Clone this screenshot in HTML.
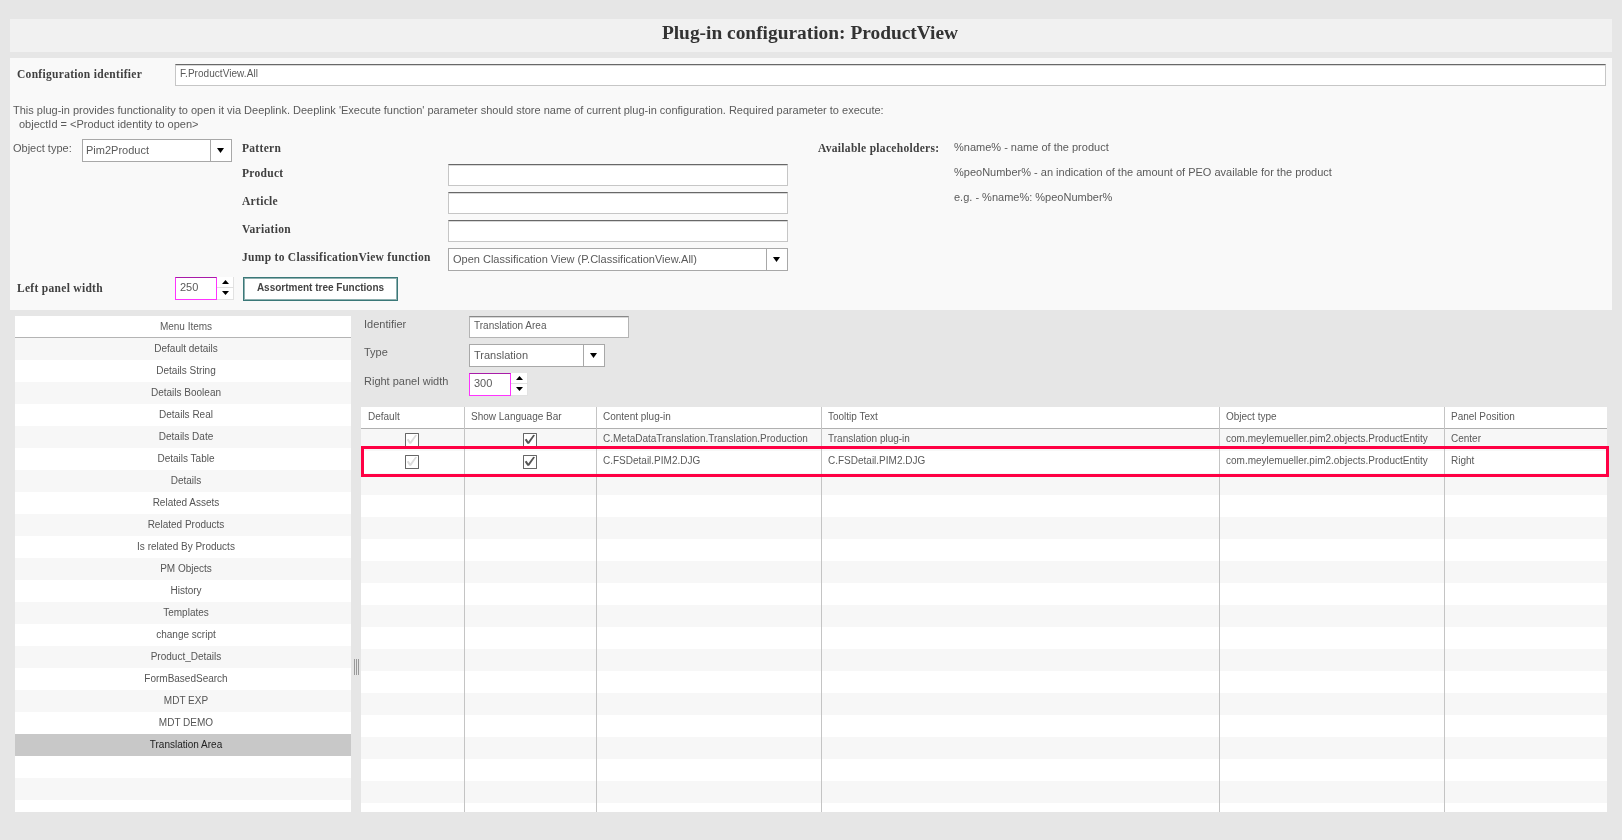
<!DOCTYPE html>
<html><head><meta charset="utf-8">
<style>
html,body{margin:0;padding:0;}
body{width:1622px;height:840px;background:#e6e6e6;position:relative;overflow:hidden;font-family:"Liberation Sans",sans-serif;color:#5a5a5a;}
.a{position:absolute;}
.t{position:absolute;white-space:nowrap;line-height:1;}
.sf{font-family:"Liberation Serif",serif;font-weight:bold;color:#404040;font-size:11.5px;letter-spacing:0.3px;margin-top:1px;}
.s11{font-size:11px;}
.s10{font-size:10px;}
.inp{position:absolute;background:#fff;border:1px solid #c6c6c6;border-top:1px solid #686868;box-shadow:inset 0 1px 0 #d8d8d8;box-sizing:border-box;}
.sel{position:absolute;background:#fff;border:1px solid #a8a8a8;box-sizing:border-box;}
.sel .dv{position:absolute;top:0;bottom:0;width:1px;background:#a8a8a8;}
.arr{position:absolute;width:0;height:0;border-left:4px solid transparent;border-right:4px solid transparent;border-top:5px solid #111;}
.uarr{position:absolute;width:0;height:0;border-left:4px solid transparent;border-right:4px solid transparent;border-bottom:5px solid #111;}
.mi{position:absolute;left:0;width:330px;padding-left:6px;height:22px;text-align:center;font-size:10px;line-height:21px;color:#5a5a5a;}
.cb{width:14px;height:14px;box-sizing:border-box;border:1.5px solid #666;border-radius:0.6px;background:#fff;}
.cb svg{position:absolute;left:-1.5px;top:-1.5px;}

</style></head>
<body><div style="position:absolute;left:0;top:0;width:1622px;height:840px;will-change:transform;">
<div class="a" style="left:10px;top:19px;width:1602px;height:33px;background:#f1f1f1;"></div>
<div class="t" style="left:-1px;width:1622px;text-align:center;top:23px;font-family:'Liberation Serif',serif;font-weight:bold;font-size:19.4px;color:#333;">Plug-in configuration: ProductView</div>
<div class="a" style="left:10px;top:58px;width:1602px;height:252px;background:#f9f9f9;"></div>
<div class="t sf" style="left:17px;top:68px;">Configuration identifier</div>
<div class="inp" style="left:175px;top:64px;width:1431px;height:22px;"></div>
<div class="t s10" style="left:180px;top:69px;letter-spacing:0.05px;">F.ProductView.All</div>
<div class="t s11" style="left:13px;top:105px;">This plug-in provides functionality to open it via Deeplink. Deeplink 'Execute function' parameter should store name of current plug-in configuration. Required parameter to execute:</div>
<div class="t s11" style="left:19px;top:119px;">objectId = &lt;Product identity to open&gt;</div>
<div class="t s11" style="left:13px;top:143px;">Object type:</div>
<div class="sel" style="left:82px;top:139px;width:150px;height:23px;"><div class="dv" style="left:127px"></div><svg class="a" style="left:134px;top:8px" width="7" height="5" viewBox="0 0 7 5"><path d="M0 0 L3.5 5 L7 0Z" fill="#000"/></svg></div><div class="t s11" style="left:86px;top:145px;">Pim2Product</div>
<div class="t sf" style="left:242px;top:142px;">Pattern</div>
<div class="t sf" style="left:242px;top:167px;">Product</div>
<div class="inp" style="left:448px;top:164px;width:340px;height:22px;"></div>
<div class="t sf" style="left:242px;top:195px;">Article</div>
<div class="inp" style="left:448px;top:192px;width:340px;height:22px;"></div>
<div class="t sf" style="left:242px;top:223px;">Variation</div>
<div class="inp" style="left:448px;top:220px;width:340px;height:22px;"></div>
<div class="t sf" style="left:242px;top:251px;">Jump to ClassificationView function</div>
<div class="sel" style="left:448px;top:248px;width:340px;height:23px;"><div class="dv" style="left:317px"></div><svg class="a" style="left:324px;top:8px" width="7" height="5" viewBox="0 0 7 5"><path d="M0 0 L3.5 5 L7 0Z" fill="#000"/></svg></div><div class="t s11" style="left:453px;top:254px;">Open Classification View (P.ClassificationView.All)</div>
<div class="t sf" style="left:818px;top:142px;">Available placeholders:</div>
<div class="t s11" style="left:954px;top:142px;">%name% - name of the product</div>
<div class="t s11" style="left:954px;top:167px;">%peoNumber% - an indication of the amount of PEO available for the product</div>
<div class="t s11" style="left:954px;top:192px;">e.g. - %name%: %peoNumber%</div>
<div class="t sf" style="left:17px;top:282px;">Left panel width</div>
<div class="a" style="left:175px;top:277px;width:42px;height:23px;box-sizing:border-box;border:1px solid #ff33ff;border-top-color:#a81ca8;background:#fff;"></div><div class="t s11" style="left:180px;top:282px;">250</div><div class="a" style="left:217px;top:277px;width:17px;height:10px;box-sizing:border-box;background:#fff;border-right:1px solid #e2e2e2;"></div><div class="a" style="left:217px;top:287px;width:17px;height:1px;background:#e0e0e0;"></div><div class="a" style="left:217px;top:288px;width:17px;height:12px;box-sizing:border-box;background:#fff;border-right:1px solid #e2e2e2;border-bottom:1px solid #e2e2e2;"></div><svg class="a" style="left:222px;top:280px;" width="7" height="4" viewBox="0 0 7 4"><path d="M0 4 L3.5 0 L7 4Z" fill="#000"/></svg><svg class="a" style="left:222px;top:291px;" width="7" height="4" viewBox="0 0 7 4"><path d="M0 0 L3.5 4 L7 0Z" fill="#000"/></svg>
<div class="a" style="left:243px;top:277px;width:155px;height:24px;box-sizing:border-box;border:1px solid #3a7878;box-shadow:inset 0 0 0 1px #8fb0b0;background:#fff;"></div>
<div class="t" style="left:243px;width:155px;text-align:center;top:283px;font-size:10px;font-weight:bold;color:#444;">Assortment tree Functions</div>
<div class="a" style="left:15px;top:316px;width:336px;height:496px;background:#fff;overflow:hidden;">
<div class="mi" style="top:0;border-bottom:1px solid #b4b4b4;height:21px;line-height:21px;">Menu Items</div>
<div class="mi" style="top:22px;background:#f7f7f7;color:#555;">Default details</div>
<div class="mi" style="top:44px;background:#fff;color:#555;">Details String</div>
<div class="mi" style="top:66px;background:#f7f7f7;color:#555;">Details Boolean</div>
<div class="mi" style="top:88px;background:#fff;color:#555;">Details Real</div>
<div class="mi" style="top:110px;background:#f7f7f7;color:#555;">Details Date</div>
<div class="mi" style="top:132px;background:#fff;color:#555;">Details Table</div>
<div class="mi" style="top:154px;background:#f7f7f7;color:#555;">Details</div>
<div class="mi" style="top:176px;background:#fff;color:#555;">Related Assets</div>
<div class="mi" style="top:198px;background:#f7f7f7;color:#555;">Related Products</div>
<div class="mi" style="top:220px;background:#fff;color:#555;">Is related By Products</div>
<div class="mi" style="top:242px;background:#f7f7f7;color:#555;">PM Objects</div>
<div class="mi" style="top:264px;background:#fff;color:#555;">History</div>
<div class="mi" style="top:286px;background:#f7f7f7;color:#555;">Templates</div>
<div class="mi" style="top:308px;background:#fff;color:#555;">change script</div>
<div class="mi" style="top:330px;background:#f7f7f7;color:#555;">Product_Details</div>
<div class="mi" style="top:352px;background:#fff;color:#555;">FormBasedSearch</div>
<div class="mi" style="top:374px;background:#f7f7f7;color:#555;">MDT EXP</div>
<div class="mi" style="top:396px;background:#fff;color:#555;">MDT DEMO</div>
<div class="mi" style="top:418px;background:#c8c8c8;color:#222;">Translation Area</div>
<div class="mi" style="top:440px;background:#fff;color:#555;"></div>
<div class="mi" style="top:462px;background:#f7f7f7;color:#555;"></div>
<div class="mi" style="top:484px;background:#fff;color:#555;"></div>
</div>
<div class="a" style="left:354px;top:659px;width:1px;height:16px;background:#999;"></div><div class="a" style="left:356px;top:659px;width:1px;height:16px;background:#999;"></div><div class="a" style="left:358px;top:659px;width:1px;height:16px;background:#999;"></div>
<div class="t s11" style="left:364px;top:319px;">Identifier</div>
<div class="inp" style="left:469px;top:316px;width:160px;height:22px;border-color:#b4b4b4;border-top-color:#888;"></div>
<div class="t s10" style="left:474px;top:321px;">Translation Area</div>
<div class="t s11" style="left:364px;top:347px;">Type</div>
<div class="sel" style="left:469px;top:344px;width:136px;height:23px;"><div class="dv" style="left:113px"></div><svg class="a" style="left:120px;top:8px" width="7" height="5" viewBox="0 0 7 5"><path d="M0 0 L3.5 5 L7 0Z" fill="#000"/></svg></div><div class="t s11" style="left:474px;top:350px;">Translation</div>
<div class="t s11" style="left:364px;top:376px;">Right panel width</div>
<div class="a" style="left:469px;top:373px;width:42px;height:23px;box-sizing:border-box;border:1px solid #ff33ff;border-top-color:#a81ca8;background:#fff;"></div><div class="t s11" style="left:474px;top:378px;">300</div><div class="a" style="left:511px;top:373px;width:17px;height:10px;box-sizing:border-box;background:#fff;border-right:1px solid #e2e2e2;"></div><div class="a" style="left:511px;top:383px;width:17px;height:1px;background:#e0e0e0;"></div><div class="a" style="left:511px;top:384px;width:17px;height:12px;box-sizing:border-box;background:#fff;border-right:1px solid #e2e2e2;border-bottom:1px solid #e2e2e2;"></div><svg class="a" style="left:516px;top:376px;" width="7" height="4" viewBox="0 0 7 4"><path d="M0 4 L3.5 0 L7 4Z" fill="#000"/></svg><svg class="a" style="left:516px;top:387px;" width="7" height="4" viewBox="0 0 7 4"><path d="M0 0 L3.5 4 L7 0Z" fill="#000"/></svg>
<div class="a" style="left:361px;top:407px;width:1246px;height:405px;background:#fff;overflow:hidden;">
<div class="a" style="left:0;top:0;width:1246px;height:21px;background:#fff;border-bottom:1px solid #b0b0b0;"></div>
<div class="a" style="left:0;top:22px;width:1246px;height:22px;background:#f7f7f7;"></div>
<div class="a" style="left:0;top:44px;width:1246px;height:22px;background:#fff;"></div>
<div class="a" style="left:0;top:66px;width:1246px;height:22px;background:#f7f7f7;"></div>
<div class="a" style="left:0;top:88px;width:1246px;height:22px;background:#fff;"></div>
<div class="a" style="left:0;top:110px;width:1246px;height:22px;background:#f7f7f7;"></div>
<div class="a" style="left:0;top:132px;width:1246px;height:22px;background:#fff;"></div>
<div class="a" style="left:0;top:154px;width:1246px;height:22px;background:#f7f7f7;"></div>
<div class="a" style="left:0;top:176px;width:1246px;height:22px;background:#fff;"></div>
<div class="a" style="left:0;top:198px;width:1246px;height:22px;background:#f7f7f7;"></div>
<div class="a" style="left:0;top:220px;width:1246px;height:22px;background:#fff;"></div>
<div class="a" style="left:0;top:242px;width:1246px;height:22px;background:#f7f7f7;"></div>
<div class="a" style="left:0;top:264px;width:1246px;height:22px;background:#fff;"></div>
<div class="a" style="left:0;top:286px;width:1246px;height:22px;background:#f7f7f7;"></div>
<div class="a" style="left:0;top:308px;width:1246px;height:22px;background:#fff;"></div>
<div class="a" style="left:0;top:330px;width:1246px;height:22px;background:#f7f7f7;"></div>
<div class="a" style="left:0;top:352px;width:1246px;height:22px;background:#fff;"></div>
<div class="a" style="left:0;top:374px;width:1246px;height:22px;background:#f7f7f7;"></div>
<div class="a" style="left:0;top:396px;width:1246px;height:22px;background:#fff;"></div>
<div class="a" style="left:103px;top:0;width:1px;height:405px;background:#c4c4c4;"></div>
<div class="a" style="left:235px;top:0;width:1px;height:405px;background:#c4c4c4;"></div>
<div class="a" style="left:460px;top:0;width:1px;height:405px;background:#c4c4c4;"></div>
<div class="a" style="left:858px;top:0;width:1px;height:405px;background:#c4c4c4;"></div>
<div class="a" style="left:1083px;top:0;width:1px;height:405px;background:#c4c4c4;"></div>
<div class="t s10" style="left:7px;top:5px;">Default</div>
<div class="t s10" style="left:110px;top:5px;">Show Language Bar</div>
<div class="t s10" style="left:242px;top:5px;">Content plug-in</div>
<div class="t s10" style="left:467px;top:5px;">Tooltip Text</div>
<div class="t s10" style="left:865px;top:5px;">Object type</div>
<div class="t s10" style="left:1090px;top:5px;">Panel Position</div>
<div class="a cb" style="left:44px;top:26px;"><svg width="14" height="14" viewBox="0 0 14 14"><path d="M1.7 6.8 L3.6 5.7 L5.3 8.4 L10.3 1.8 L12 2.3 L6.1 10.7 L4.4 10.7 Z" fill="#dcdcdc"/></svg></div>
<div class="a cb" style="left:162px;top:26px;"><svg width="14" height="14" viewBox="0 0 14 14"><path d="M1.7 6.8 L3.6 5.7 L5.3 8.4 L10.3 1.8 L12 2.3 L6.1 10.7 L4.4 10.7 Z" fill="#555"/></svg></div>
<div class="t s10" style="left:242px;top:27px;">C.MetaDataTranslation.Translation.Production</div>
<div class="t s10" style="left:467px;top:27px;">Translation plug-in</div>
<div class="t s10" style="left:865px;top:27px;">com.meylemueller.pim2.objects.ProductEntity</div>
<div class="t s10" style="left:1090px;top:27px;">Center</div>
<div class="a cb" style="left:44px;top:48px;"><svg width="14" height="14" viewBox="0 0 14 14"><path d="M1.7 6.8 L3.6 5.7 L5.3 8.4 L10.3 1.8 L12 2.3 L6.1 10.7 L4.4 10.7 Z" fill="#dcdcdc"/></svg></div>
<div class="a cb" style="left:162px;top:48px;"><svg width="14" height="14" viewBox="0 0 14 14"><path d="M1.7 6.8 L3.6 5.7 L5.3 8.4 L10.3 1.8 L12 2.3 L6.1 10.7 L4.4 10.7 Z" fill="#555"/></svg></div>
<div class="t s10" style="left:242px;top:49px;">C.FSDetail.PIM2.DJG</div>
<div class="t s10" style="left:467px;top:49px;">C.FSDetail.PIM2.DJG</div>
<div class="t s10" style="left:865px;top:49px;">com.meylemueller.pim2.objects.ProductEntity</div>
<div class="t s10" style="left:1090px;top:49px;">Right</div>
</div>
<div class="a" style="left:361px;top:446px;width:1248px;height:31px;box-sizing:border-box;border:3px solid #ff0044;"></div>
</div></body></html>
